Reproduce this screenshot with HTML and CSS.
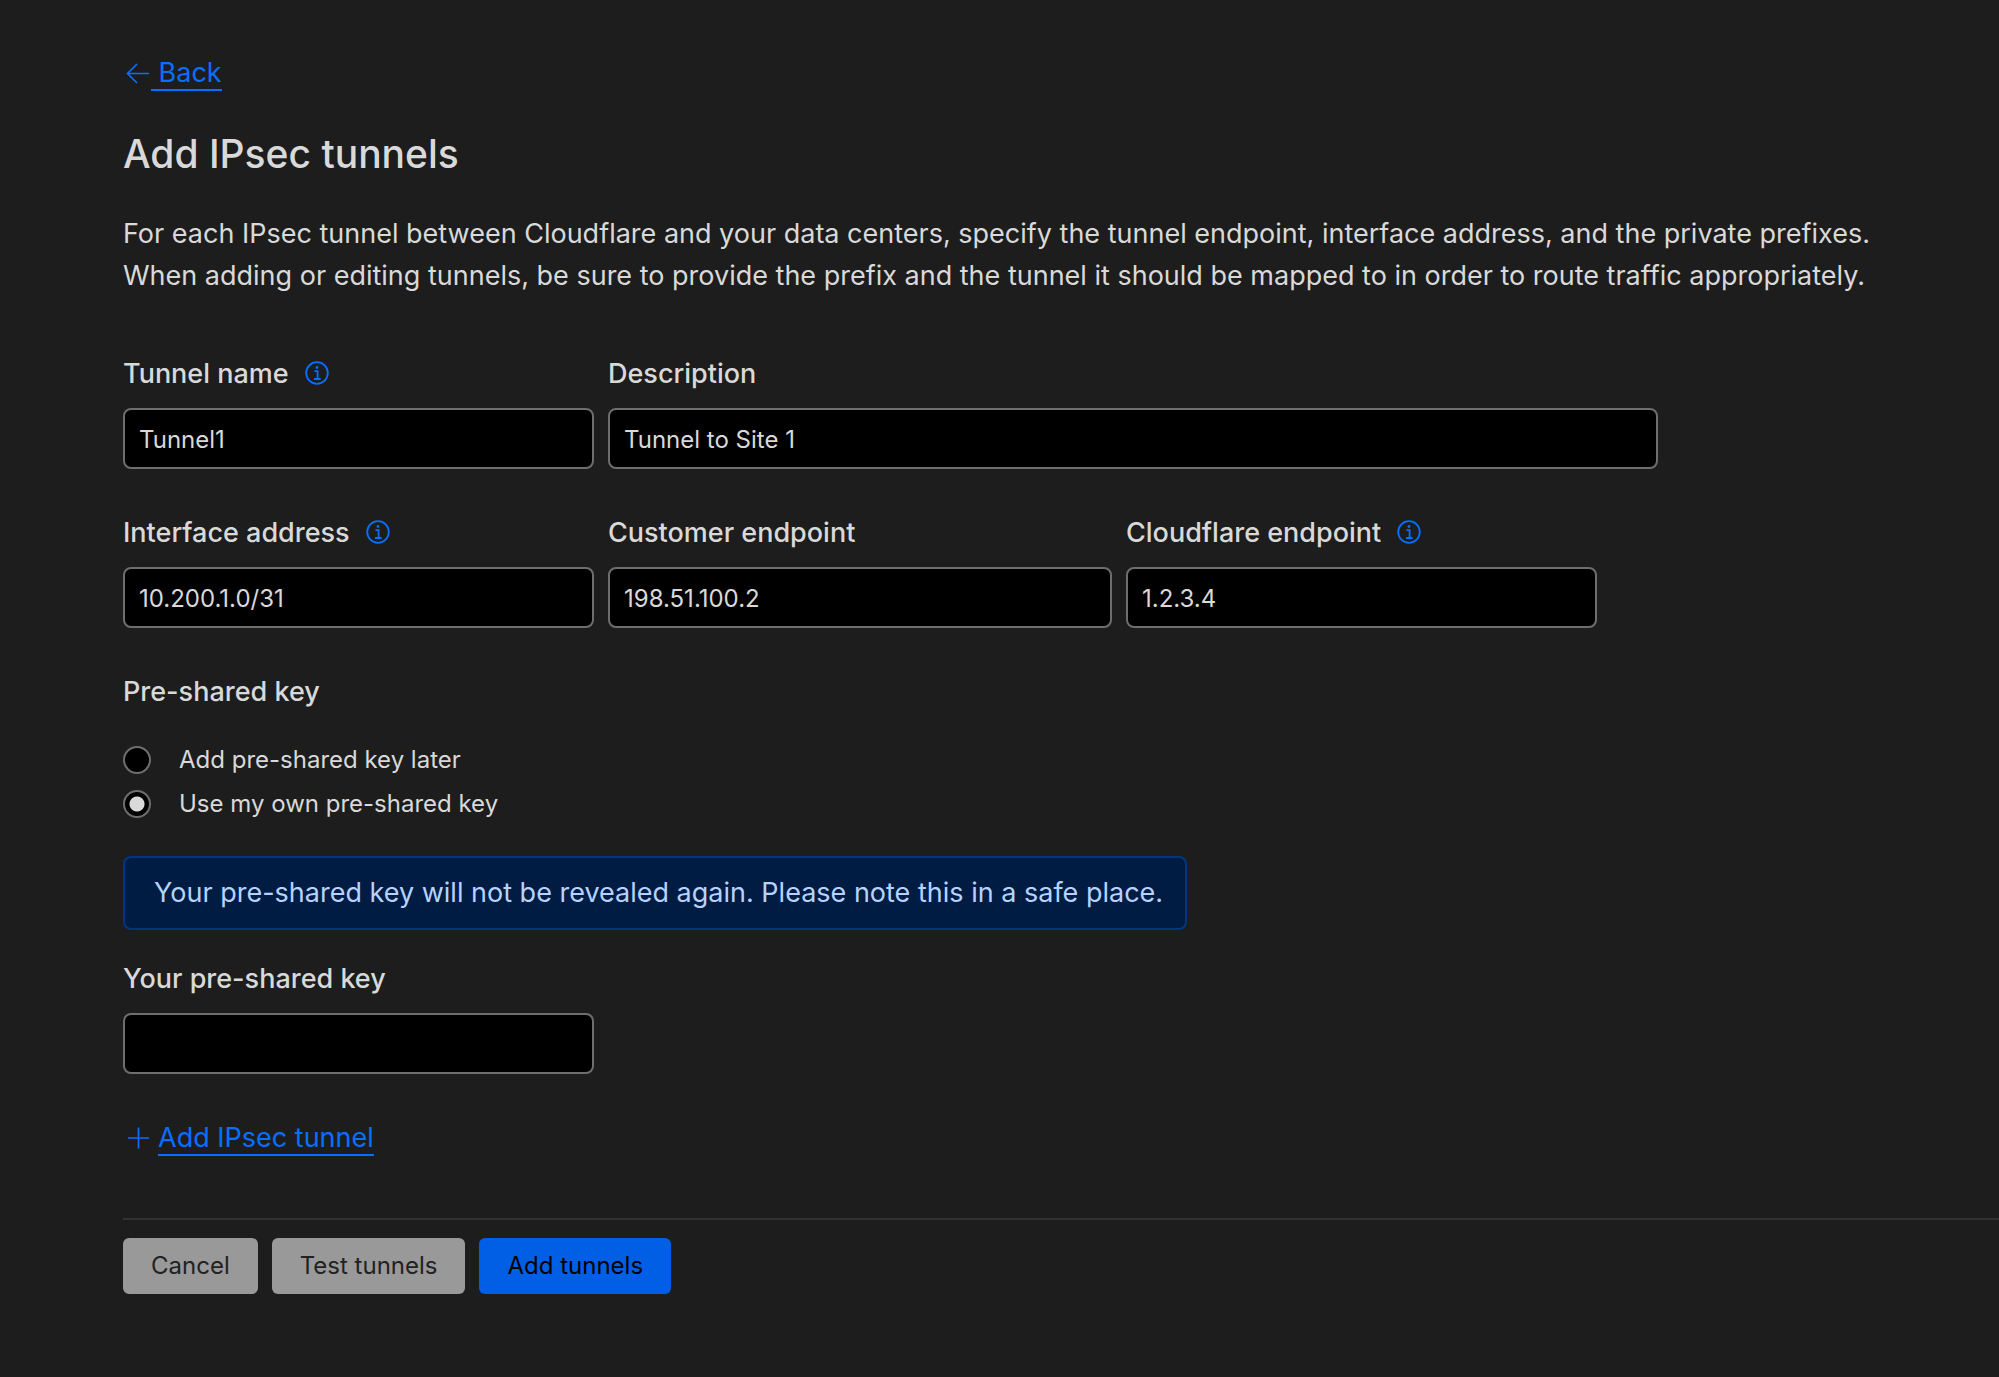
FILE: index.html
```html
<!DOCTYPE html>
<html lang="en">
<head>
<meta charset="utf-8">
<meta name="viewport" content="width=device-width, initial-scale=1">
<title>Add IPsec tunnels</title>
<link rel="stylesheet" href="styles.css">
</head>
<body>
<svg class="sprite" aria-hidden="true">
  <symbol id="icon-info" viewBox="0 0 24 24">
    <circle cx="12" cy="12" r="10.8" fill="none" stroke="currentColor" stroke-width="1.8"/>
    <path d="M9.4 10.2h3.200v7.400M9 18h6.600" fill="none" stroke="currentColor" stroke-width="1.800"/>
    <circle cx="12" cy="6.500" r="1.400" fill="currentColor"/>
  </symbol>
</svg>
<main class="page">
  <a class="link back" href="#"><svg class="link-icon" viewBox="0 0 28 28" aria-hidden="true"><path d="M26 13.500H5M14 4L4.500 13.500l9.500 9.500" fill="none" stroke="currentColor" stroke-width="1.700"/></svg><span class="link-text back-text">&nbsp;Back</span></a>
  <h1 class="title">Add IPsec tunnels</h1>
  <p class="intro">For each IPsec tunnel between Cloudflare and your data centers, specify the tunnel endpoint, interface address, and the private prefixes.<br>When adding or editing tunnels, be sure to provide the prefix and the tunnel it should be mapped to in order to route traffic appropriately.</p>
  <form class="form">
    <div class="row">
      <div class="field">
        <div class="label-line"><label class="label" for="name">Tunnel name</label><svg class="info"><use href="#icon-info"/></svg></div>
        <input class="input" id="name" type="text" value="Tunnel1">
      </div>
      <div class="field field-wide">
        <div class="label-line"><label class="label" for="desc">Description</label></div>
        <input class="input" id="desc" type="text" value="Tunnel to Site 1">
      </div>
    </div>
    <div class="row">
      <div class="field">
        <div class="label-line"><label class="label" for="iface">Interface address</label><svg class="info"><use href="#icon-info"/></svg></div>
        <input class="input" id="iface" type="text" value="10.200.1.0/31">
      </div>
      <div class="field field-medium">
        <div class="label-line"><label class="label" for="customer">Customer endpoint</label></div>
        <input class="input" id="customer" type="text" value="198.51.100.2">
      </div>
      <div class="field">
        <div class="label-line"><label class="label" for="cf">Cloudflare endpoint</label><svg class="info"><use href="#icon-info"/></svg></div>
        <input class="input" id="cf" type="text" value="1.2.3.4">
      </div>
    </div>
    <fieldset class="choices">
      <legend class="label">Pre-shared key</legend>
      <label class="choice"><input class="radio" type="radio" name="psk">Add pre-shared key later</label>
      <label class="choice"><input class="radio" type="radio" name="psk" checked>Use my own pre-shared key</label>
    </fieldset>
    <p class="notice">Your pre-shared key will not be revealed again. Please note this in a safe place.</p>
    <div class="row">
      <div class="field">
        <div class="label-line"><label class="label" for="key">Your pre-shared key</label></div>
        <input class="input" id="key" type="text">
      </div>
    </div>
    <a class="link add" href="#"><svg class="link-icon" viewBox="0 0 28 28" aria-hidden="true"><path d="M5 13h21M15.500 2.500v21" fill="none" stroke="currentColor" stroke-width="1.700"/></svg><span class="link-text">Add IPsec tunnel</span></a>
    <div class="actions">
      <button class="button" type="button">Cancel</button>
      <button class="button" type="button">Test tunnels</button>
      <button class="button button-primary" type="submit">Add tunnels</button>
    </div>
  </form>
</main>
</body>
</html>
```
FILE: styles.css
```css
*, *::before, *::after { box-sizing: border-box; }
body {
  margin: 0;
  min-height: 100vh;
  background: #1d1d1d;
  color: #d9d9d9;
  font-family: Inter, "Liberation Sans", sans-serif;
  font-size: 27px;
  line-height: 42px;
}
.sprite { display: none; }
.page { padding: 52px 0 60px 123px; }
.link { display: flex; width: fit-content; color: #086fff; text-decoration: none; }
.link-icon { width: 28px; height: 28px; margin-top: 8px; }
.link-text { border-bottom: 2px solid currentColor; height: 39px; margin-left: 7px; }
.back-text { margin-left: 0; }
.title { margin: 35px 0 0; font-size: 39px; line-height: 56px; font-weight: 500; }
.intro { margin: 31px 0 0; padding-right: 60px; }
.row { display: flex; flex-wrap: wrap; gap: 14px; margin-bottom: 43px; }
.form { margin-top: 56px; }
.field { display: flex; flex-direction: column; gap: 13px; width: 471px; }
.field-medium { width: 504px; }
.field-wide { width: 1050px; }
.label-line { display: flex; align-items: center; gap: 16px; }
.label { font-weight: 500; }
.info { width: 24px; height: 24px; margin-bottom: 2px; color: #086fff; }
.input {
  width: 100%;
  height: 61px;
  padding: 1px 14px 0;
  border: 2px solid #6e6e6e;
  border-radius: 8px;
  background: #000;
  color: #d9d9d9;
  font: inherit;
  font-size: 24px;
}
.choices { margin: 0; padding: 1px 0 0; border: 0; }
.choices legend { padding: 0; margin-bottom: 24px; }
.choice { display: flex; align-items: center; gap: 28px; height: 44px; font-size: 24px; }
.radio {
  appearance: none;
  width: 28px;
  height: 28px;
  margin: 0;
  border: 2px solid #6e6e6e;
  border-radius: 50%;
  background: #000;
}
.radio:checked { background: radial-gradient(circle, #d9d9d9 7px, #000 8px); }
.notice {
  width: fit-content;
  margin: 30px 0 28px;
  padding: 14px 22px 14px 29px;
  border: 2px solid #003681;
  border-radius: 8px;
  background: #001c43;
  color: #b6d2ff;
}
.actions { display: flex; gap: 14px; margin-top: 62px; padding-top: 18px; border-top: 2px solid #313131; }
.button {
  height: 56px;
  padding: 0 28px;
  border: 0;
  border-radius: 6px;
  background: #999;
  color: #222;
  font: inherit;
  font-size: 24px;
}
.button-primary { background: #005fe5; color: #000; }
```
